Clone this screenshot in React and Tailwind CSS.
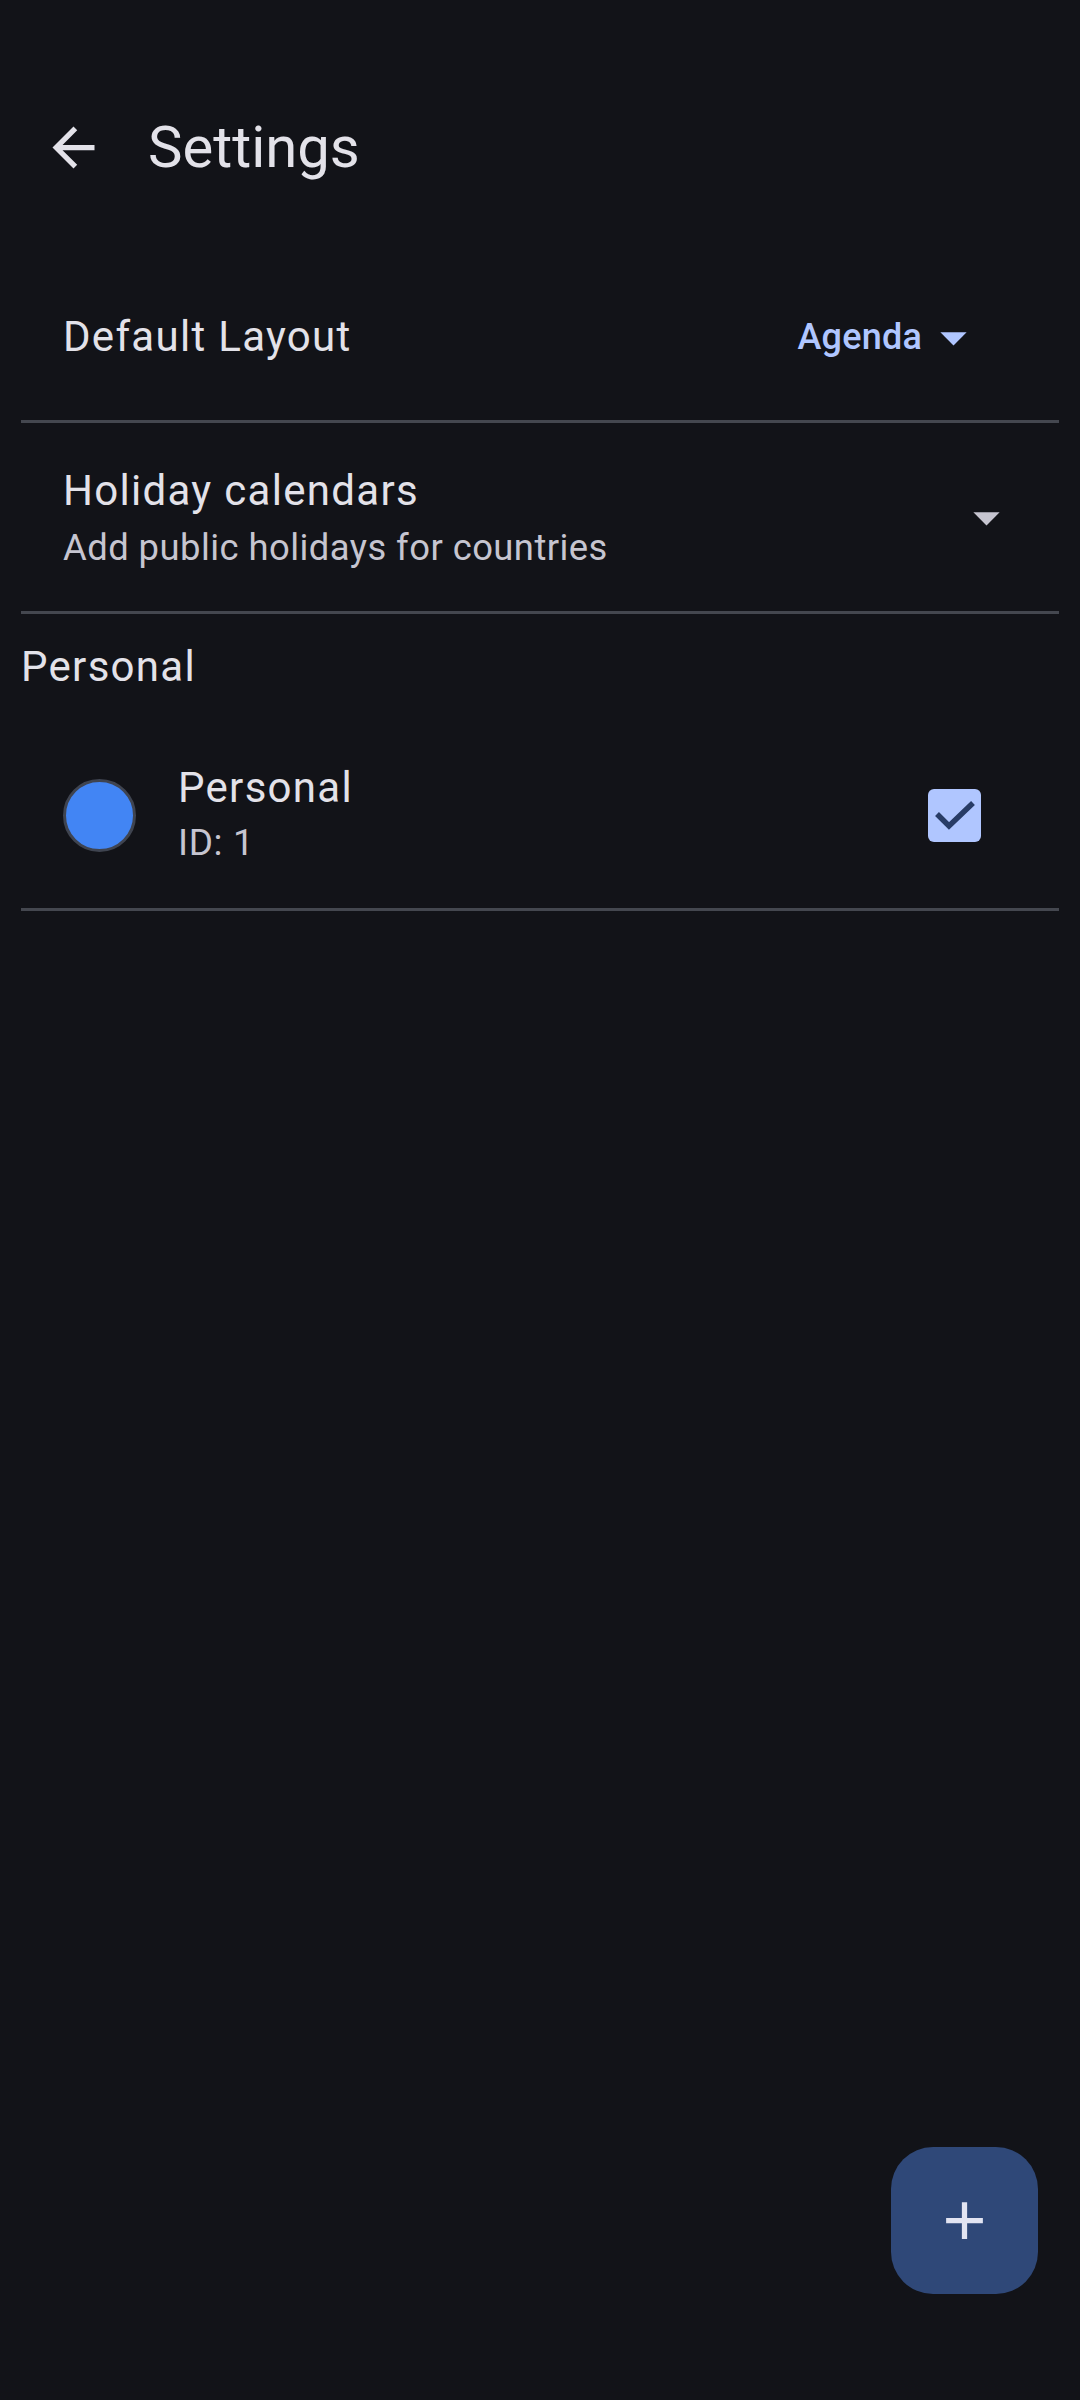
// Settings screen: layout picker, holiday calendars, calendar list
import { useState } from 'react'

const font = { fontFamily: 'Roboto, "Noto Sans", sans-serif' }

function ArrowBack() {
  return (
    <svg viewBox="0 0 24 24" className="w-[63px] h-[63px] fill-[#e3e2e9]">
      <path d="M20 11H7.83l5.59-5.59L12 4l-8 8 8 8 1.41-1.41L7.83 13H20v-2z" />
    </svg>
  )
}

function DropDown({ className }) {
  return (
    <svg viewBox="0 0 24 24" className={className}>
      <path d="M7 10l5 5 5-5z" />
    </svg>
  )
}

function Divider() {
  return <div className="mx-[21px] h-[3px] bg-[#44474f]" />
}

export default function App() {
  const [checked, setChecked] = useState(true)

  return (
    <div className="relative min-h-[2400px] bg-[#121318] text-[#e3e2e9]" style={font}>
      {/* status bar space */}
      <div className="h-[63px]" />

      {/* top app bar */}
      <div className="flex h-[168px] items-center pl-[42px]">
        <ArrowBack />
        <h1 className="ml-[43px] text-[58px] leading-[72px]">Settings</h1>
      </div>

      {/* default layout */}
      <div className="flex items-center pt-[78px] pb-[55px] pl-[63px] pr-[95px]">
        <span className="flex-1 text-[42px] leading-[56px] tracking-[1.3px]">Default Layout</span>
        <button className="flex items-center text-[#b0c6ff]">
          <span className="text-[36px] leading-[56px] font-medium tracking-[0.2px]">Agenda</span>
          <DropDown className="-my-[4px] w-[63px] h-[63px] fill-[#b0c6ff]" />
        </button>
      </div>
      <Divider />

      {/* holiday calendars */}
      <div className="flex items-center pt-[40px] pb-[34px] pl-[63px] pr-[62px]">
        <div className="flex-1">
          <div className="text-[42px] leading-[56px] tracking-[1.3px]">Holiday calendars</div>
          <div className="text-[36.4px] leading-[58px] tracking-[0.45px] text-[#c6c5d0]">
            Add public holidays for countries
          </div>
        </div>
        <DropDown className="mb-[6px] w-[63px] h-[63px] fill-[#c6c5d0]" />
      </div>
      <Divider />

      {/* calendars section */}
      <div className="pt-[25px] pl-[21px] text-[42px] leading-[56px] tracking-[1.3px]">Personal</div>

      <div className="flex items-center pt-[65px] pb-[38px] pl-[63px] pr-[99px]">
        <div className="h-[73px] w-[73px] rounded-full border-[3px] border-[#3f4450] bg-[#4285f4]" />
        <div className="ml-[42px] flex-1">
          <div className="text-[42px] leading-[56px] tracking-[1.3px]">Personal</div>
          <div className="text-[37px] leading-[54px] tracking-[0.6px] text-[#c6c5d0]">ID: 1</div>
        </div>
        <button
          onClick={() => setChecked(!checked)}
          className={checked ? 'h-[53px] w-[53px] rounded-[6px] bg-[#b0c6ff]' : 'h-[53px] w-[53px] rounded-[6px] border-[5px] border-[#c6c5d0]'}
        >
          {checked && (
            <svg viewBox="0 0 53 53" className="h-[53px] w-[53px]">
              <path d="M9 25 L21 37 L45 14" fill="none" stroke="#283c66" strokeWidth="5.5" />
            </svg>
          )}
        </button>
      </div>
      <Divider />

      {/* FAB */}
      <button className="absolute right-[42px] bottom-[106px] flex h-[147px] w-[147px] items-center justify-center rounded-[42px] bg-[#2f4878]">
        <svg viewBox="0 0 24 24" className="h-[63px] w-[63px] fill-[#e2e4f2]">
          <path d="M19 13h-6v6h-2v-6H5v-2h6V5h2v6h6v2z" />
        </svg>
      </button>
    </div>
  )
}
